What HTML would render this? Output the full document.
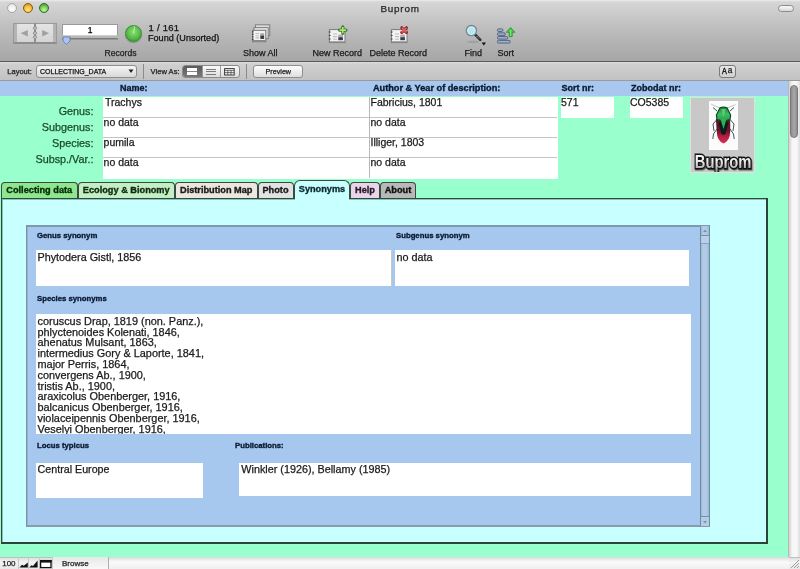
<!DOCTYPE html><html><head><meta charset="utf-8"><style>
html,body{margin:0;padding:0;width:800px;height:569px;overflow:hidden;background:#99ffcc;}
body{position:relative;font-family:"Liberation Sans", sans-serif;}
.t{position:absolute;white-space:nowrap;-webkit-text-stroke:0.25px currentColor;}
body{will-change:transform;}
.b{position:absolute;box-sizing:border-box;}
svg{position:absolute;}
</style></head><body>
<div class="b" style="left:0px;top:0px;width:800px;height:62px;background:linear-gradient(#ececec 0px,#d6d6d6 2px,#cbcbcb 14px,#bcbcbc 30px,#a6a6a6 61px);"></div>
<div class="b" style="left:0px;top:61px;width:800px;height:1px;background:#5a5a5a;"></div>
<div class="b" style="left:6.800000000000001px;top:3.4px;width:10px;height:10px;border-radius:50%;background:radial-gradient(circle at 50% 70%,#ffffff,#f0f0f0 50%,#d8d8d8);border:1px solid #a8a8a8;"></div>
<div class="b" style="left:22.9px;top:3.4px;width:10px;height:10px;border-radius:50%;background:radial-gradient(circle at 50% 75%,#ffe890,#f8b830 55%,#c07a10);border:1px solid #8a5a10;"></div>
<div class="b" style="left:39.3px;top:3.4px;width:10px;height:10px;border-radius:50%;background:radial-gradient(circle at 50% 75%,#c8f8a0,#70c850 55%,#3a8a28);border:1px solid #2a6a20;"></div>
<div class="t" style="left:300.1px;width:200px;text-align:center;top:3.92px;font-size:9.9px;line-height:9.9px;font-weight:400;color:#262626;letter-spacing:0.8px;">Buprom</div>
<div class="b" style="left:778px;top:4.5px;width:16px;height:7.5px;border-radius:4px;border:1px solid #8a8a8a;background:linear-gradient(#fafafa,#d8d8d8);"></div>
<div class="b" style="left:13px;top:23px;width:44px;height:20.5px;background:linear-gradient(#e4e4e4,#d4d4d4);border:1px solid #9a9a9a;border-bottom:2px solid #8e8e8e;box-shadow:inset 3px 0 0 #b4b4b4, inset -3px 0 0 #b4b4b4;"></div>
<div class="b" style="left:34px;top:23px;width:2px;height:20px;background:#8e8e8e;"></div>
<svg style="left:13px;top:23px" width="44" height="20"><path d="M7.6 10.2 L14.8 7 L14.8 13.5 Z" fill="#a0a0a0"/><path d="M36.1 10.2 L29.2 7 L29.2 13.5 Z" fill="#a0a0a0"/><ellipse cx="22" cy="5.1" rx="1.8" ry="1.2" fill="#d8d8d8" stroke="#8a8a8a" stroke-width="0.9"/><ellipse cx="22" cy="10.1" rx="1.8" ry="1.2" fill="#d8d8d8" stroke="#8a8a8a" stroke-width="0.9"/><ellipse cx="22" cy="14.2" rx="1.8" ry="1.2" fill="#d8d8d8" stroke="#8a8a8a" stroke-width="0.9"/></svg>
<div class="b" style="left:62px;top:24px;width:56px;height:12px;background:#fff;border:1px solid #9a9a9a;border-bottom-color:#cfcfcf;"></div>
<div class="t" style="left:-10px;width:200px;text-align:center;top:26.00px;font-size:8.5px;line-height:8.5px;font-weight:400;color:#000;">1</div>
<div class="b" style="left:62px;top:38.3px;width:56px;height:2.3000000000000043px;background:linear-gradient(#6e6e6e,#c0c0c0);border-radius:1px;"></div>
<svg style="left:62px;top:36px" width="10" height="10"><path d="M1 1 L8 1 L8 5 L4.5 8.5 L1 5 Z" fill="#a8c4f0" stroke="#5a78b0" stroke-width="0.8"/></svg>
<div class="b" style="left:124.8px;top:25px;width:17px;height:17px;border-radius:50%;background:radial-gradient(circle at 50% 40%,#8ee07a,#58c048 50%,#2e8a2a 100%);border:1px solid #3a8a34;box-shadow:0 1px 1px rgba(0,0,0,.25);"></div>
<svg style="left:124.8px;top:25px" width="17" height="17"><path d="M8.5 8.5 L9.6 1.2" stroke="#c8f0b0" stroke-width="0.9"/></svg>
<div class="t" style="left:104.5px;top:49.22px;font-size:8.6px;line-height:8.6px;font-weight:400;color:#222;">Records</div>
<div class="t" style="left:148.5px;top:22.96px;font-size:9.5px;line-height:9.5px;font-weight:400;color:#111;letter-spacing:0.25px;">1 / 161</div>
<div class="t" style="left:148px;top:34.20px;font-size:9.1px;line-height:9.1px;font-weight:400;color:#111;">Found (Unsorted)</div>
<svg style="left:250px;top:23px" width="22" height="21">
<rect x="5.5" y="1.8" width="14.2" height="11" fill="#dcdcdc" stroke="#7e7e7e" stroke-width="1"/>
<rect x="4" y="4.6" width="14.2" height="11" fill="#e4e4e4" stroke="#7e7e7e" stroke-width="1"/>
<rect x="2.6" y="7.3" width="13.2" height="11.4" fill="#f2f2f2" stroke="#747474" stroke-width="1"/>
<path d="M2.6 17.8 h13.2" stroke="#888" stroke-width="1.6"/>
<path d="M5.5 10.5 h3.5 M5.5 12.7 h3.5 M5.5 14.9 h3.5" stroke="#b8c0c8" stroke-width="1.1"/>
<rect x="10.3" y="10.3" width="3.8" height="2.2" fill="#b8a0a0"/>
<rect x="10.3" y="12.5" width="3.8" height="3.4" fill="#3a3a48"/>
<path d="M2 8.8 h1.6 M2 11.3 h1.6 M2 13.8 h1.6 M2 16.3 h1.6" stroke="#404040" stroke-width="1.2"/>
</svg>
<div class="t" style="left:243px;top:48.68px;font-size:9px;line-height:9px;font-weight:400;color:#1a1a1a;">Show All</div>
<svg style="left:327px;top:24px" width="24" height="20">
<rect x="2.4" y="5.6" width="15.6" height="13" fill="#f2f2f2" stroke="#7a7a7a" stroke-width="1"/>
<path d="M2.4 18 h15.6" stroke="#888" stroke-width="1.4"/>
<path d="M6 10 h4 M6 12.6 h4 M6 15.2 h4" stroke="#b8c0c8" stroke-width="1.1"/>
<rect x="11.3" y="10.6" width="4.6" height="2.6" fill="#b8a8a8"/>
<rect x="11.3" y="13.2" width="4.6" height="3" fill="#3a3a50"/>
<path d="M1.8 8 h1.8 M1.8 11.5 h1.8 M1.8 15 h1.8" stroke="#404040" stroke-width="1.2"/>
<path d="M12.6 6.1 h6.4 M15.8 2.9 v6.4" stroke="#3a7a28" stroke-width="3.2" stroke-linecap="round"/>
<path d="M12.6 6.1 h6.4 M15.8 2.9 v6.4" stroke="#a8e878" stroke-width="1.6"/>
</svg>
<div class="t" style="left:312.5px;top:48.68px;font-size:9px;line-height:9px;font-weight:400;color:#1a1a1a;">New Record</div>
<svg style="left:389px;top:24px" width="24" height="20">
<rect x="2.4" y="5.6" width="15.6" height="13" fill="#f2f2f2" stroke="#7a7a7a" stroke-width="1"/>
<path d="M2.4 18 h15.6" stroke="#888" stroke-width="1.4"/>
<path d="M6 10 h4 M6 12.6 h4 M6 15.2 h4" stroke="#b8c0c8" stroke-width="1.1"/>
<rect x="11.3" y="10.6" width="4.6" height="2.6" fill="#b8a8a8"/>
<rect x="11.3" y="13.2" width="4.6" height="3" fill="#3a3a50"/>
<path d="M1.8 8 h1.8 M1.8 11.5 h1.8 M1.8 15 h1.8" stroke="#404040" stroke-width="1.2"/>
<path d="M12.8 3.8 l4.6 4.6 M17.4 3.8 l-4.6 4.6" stroke="#8a2a2a" stroke-width="3.2" stroke-linecap="round"/>
<path d="M12.8 3.8 l4.6 4.6 M17.4 3.8 l-4.6 4.6" stroke="#e86060" stroke-width="1.6"/>
</svg>
<div class="t" style="left:369.5px;top:48.68px;font-size:9px;line-height:9px;font-weight:400;color:#1a1a1a;">Delete Record</div>
<svg style="left:462px;top:22px" width="26" height="25">
<ellipse cx="11" cy="19.8" rx="6.5" ry="1.2" fill="rgba(0,0,0,0.10)"/>
<line x1="13.2" y1="12.6" x2="18.3" y2="17.8" stroke="#2a2a2a" stroke-width="2.5" stroke-linecap="round"/>
<line x1="14.6" y1="14.1" x2="17.6" y2="17.1" stroke="#e0e0e0" stroke-width="0.8" stroke-dasharray="1.2 0.8"/>
<circle cx="9.4" cy="8.6" r="5.1" fill="#d4f0f8" stroke="#6a8a94" stroke-width="1.3"/>
<circle cx="9.4" cy="8.9" r="3.2" fill="#a8dcec" opacity="0.6"/>
<path d="M19.6 20.4 h4.4 l-2.2 3 z" fill="#111"/>
</svg>
<div class="t" style="left:464.5px;top:48.68px;font-size:9px;line-height:9px;font-weight:400;color:#1a1a1a;">Find</div>
<svg style="left:496px;top:26px" width="22" height="19">
<rect x="1.4" y="2.9" width="5.6" height="2.6" rx="1.2" fill="#9ab0cc" stroke="#4e5e7c" stroke-width="0.9"/>
<rect x="1.4" y="6.8" width="7.9" height="2.6" rx="1.2" fill="#9ab0cc" stroke="#4e5e7c" stroke-width="0.9"/>
<rect x="1.4" y="10.5" width="10.4" height="2.6" rx="1.2" fill="#9ab0cc" stroke="#4e5e7c" stroke-width="0.9"/>
<rect x="1.4" y="14.4" width="12.9" height="2.7" rx="1.2" fill="#9ab0cc" stroke="#4e5e7c" stroke-width="0.9"/>
<path d="M14.6 1.6 L18.9 6.3 L16.2 6.3 L16.2 10.6 L13.2 10.6 L13.2 6.3 L10.3 6.3 Z" fill="#48c848" stroke="#2a8a2a" stroke-width="0.8" stroke-linejoin="round"/>
<path d="M14.7 4 v6" stroke="#7af07a" stroke-width="1"/>
</svg>
<div class="t" style="left:497.5px;top:48.68px;font-size:9px;line-height:9px;font-weight:400;color:#1a1a1a;">Sort</div>
<div class="b" style="left:0px;top:62px;width:800px;height:19px;background:linear-gradient(#dedede 0px,#d0d0d0 2px,#c2c2c2 18px);border-bottom:1px solid #9a9a9a;"></div>
<div class="t" style="left:7.3px;top:67.95px;font-size:7.5px;line-height:7.5px;font-weight:400;color:#222;">Layout:</div>
<div class="b" style="left:35.5px;top:65px;width:101.5px;height:13px;background:linear-gradient(#f6f6f6,#d8d8d8);border:1px solid #8e8e8e;border-radius:3px;"></div>
<div class="t" style="left:40px;top:68.27px;font-size:7px;line-height:7px;font-weight:400;color:#111;">COLLECTING_DATA</div>
<svg style="left:128px;top:69px" width="6" height="5"><path d="M0.5 0.5 h5 l-2.5 3.5 z" fill="#222"/></svg>
<div class="b" style="left:143px;top:64px;width:1px;height:15px;background:#8a8a8a;"></div>
<div class="t" style="left:150.6px;top:67.87px;font-size:7.6px;line-height:7.6px;font-weight:400;color:#222;">View As:</div>
<div class="b" style="left:182px;top:65px;width:58px;height:13px;background:linear-gradient(#fafafa,#dcdcdc);border:1px solid #8a8a8a;border-radius:3px;"></div>
<div class="b" style="left:183px;top:66px;width:19px;height:11px;background:linear-gradient(#5a5a5a,#7a7a7a);border-radius:2px 0 0 2px;"></div>
<div class="b" style="left:187px;top:67.8px;width:10px;height:7.400000000000006px;background:#fff;border-top:0;"></div>
<div class="b" style="left:187px;top:71.2px;width:10px;height:0.5999999999999943px;background:#888;"></div>
<div class="b" style="left:202px;top:66px;width:1px;height:11px;background:#9a9a9a;"></div>
<div class="b" style="left:220px;top:66px;width:1px;height:11px;background:#9a9a9a;"></div>
<div class="b" style="left:206px;top:68.5px;width:10px;height:1.0px;background:#7a7a7a;"></div>
<div class="b" style="left:206px;top:71px;width:10px;height:1px;background:#7a7a7a;"></div>
<div class="b" style="left:206px;top:73.5px;width:10px;height:1.0px;background:#7a7a7a;"></div>
<svg style="left:224px;top:67.5px" width="11" height="8"><rect x="0.6" y="0.6" width="9.6" height="6.4" fill="#f4f4f4" stroke="#3a3a3a" stroke-width="1"/><path d="M0.6 2.4 h9.6 M0.6 4.6 h9.6 M3.8 2.4 v4.6 M7 2.4 v4.6" stroke="#3a3a3a" stroke-width="0.7"/></svg>
<div class="b" style="left:246px;top:64px;width:1px;height:15px;background:#8a8a8a;"></div>
<div class="b" style="left:253px;top:65px;width:49.5px;height:13px;background:linear-gradient(#fdfdfd,#dedede);border:1px solid #8e8e8e;border-radius:3px;"></div>
<div class="t" style="left:265.5px;top:68.11px;font-size:7.2px;line-height:7.2px;font-weight:400;color:#222;">Preview</div>
<div class="b" style="left:719px;top:65.2px;width:17px;height:12.399999999999991px;background:linear-gradient(#e8e8e8,#d0d0d0);border:1px solid #7a7a7a;border-radius:3px;"></div>
<div class="t" style="left:722.4px;top:67.28px;font-size:9px;line-height:9px;font-weight:400;color:#1a1a1a;transform:scaleX(0.8);transform-origin:0 0;-webkit-text-stroke:0.5px #1a1a1a;">A</div>
<div class="t" style="left:727.8px;top:67.16px;font-size:8.2px;line-height:8.2px;font-weight:400;color:#1a1a1a;">a</div>
<div class="b" style="left:0px;top:81px;width:788px;height:15px;background:#a8c8f0;"></div>
<div class="t" style="left:120px;top:84.18px;font-size:9px;line-height:9px;font-weight:700;color:#0a1a30;-webkit-text-stroke:0.35px currentColor;">Name:</div>
<div class="t" style="left:372.9px;top:84.01px;font-size:9.2px;line-height:9.2px;font-weight:700;color:#0a1a30;-webkit-text-stroke:0.35px currentColor;">Author &amp; Year of description:</div>
<div class="t" style="left:561.5px;top:84.18px;font-size:9px;line-height:9px;font-weight:700;color:#0a1a30;-webkit-text-stroke:0.35px currentColor;">Sort nr:</div>
<div class="t" style="left:631px;top:84.18px;font-size:9px;line-height:9px;font-weight:700;color:#0a1a30;-webkit-text-stroke:0.35px currentColor;">Zobodat nr:</div>
<div class="t" style="right:706.5px;top:105.76px;font-size:10.8px;line-height:10.8px;font-weight:400;color:#1a4a2a;text-align:right;">Genus:</div>
<div class="t" style="right:706.5px;top:121.66px;font-size:10.8px;line-height:10.8px;font-weight:400;color:#1a4a2a;text-align:right;">Subgenus:</div>
<div class="t" style="right:706.5px;top:137.86px;font-size:10.8px;line-height:10.8px;font-weight:400;color:#1a4a2a;text-align:right;">Species:</div>
<div class="t" style="right:706.5px;top:154.46px;font-size:10.8px;line-height:10.8px;font-weight:400;color:#1a4a2a;text-align:right;">Subsp./Var.:</div>
<div class="b" style="left:103px;top:97px;width:455px;height:81.5px;background:#fff;"></div>
<div class="b" style="left:103px;top:117px;width:453.5px;height:1px;background:#c4c4c4;"></div>
<div class="b" style="left:103px;top:137px;width:453.5px;height:1px;background:#c4c4c4;"></div>
<div class="b" style="left:103px;top:157px;width:453.5px;height:1px;background:#c4c4c4;"></div>
<div class="b" style="left:369px;top:97px;width:1px;height:81px;background:#b8b8b8;"></div>
<div class="t" style="left:105px;top:96.91px;font-size:10.5px;line-height:10.5px;font-weight:400;color:#1a1a1a;">Trachys</div>
<div class="t" style="left:103.6px;top:117.01px;font-size:10.5px;line-height:10.5px;font-weight:400;color:#1a1a1a;">no data</div>
<div class="t" style="left:103.6px;top:137.11px;font-size:10.5px;line-height:10.5px;font-weight:400;color:#1a1a1a;">pumila</div>
<div class="t" style="left:103.6px;top:157.11px;font-size:10.5px;line-height:10.5px;font-weight:400;color:#1a1a1a;">no data</div>
<div class="t" style="left:370.5px;top:97.11px;font-size:10.5px;line-height:10.5px;font-weight:400;color:#1a1a1a;">Fabricius, 1801</div>
<div class="t" style="left:370.5px;top:117.01px;font-size:10.5px;line-height:10.5px;font-weight:400;color:#1a1a1a;">no data</div>
<div class="t" style="left:370.5px;top:137.11px;font-size:10.5px;line-height:10.5px;font-weight:400;color:#1a1a1a;">Illiger, 1803</div>
<div class="t" style="left:370.5px;top:157.11px;font-size:10.5px;line-height:10.5px;font-weight:400;color:#1a1a1a;">no data</div>
<div class="b" style="left:560.5px;top:97px;width:53.5px;height:21px;background:#fff;"></div>
<div class="t" style="left:561px;top:97.11px;font-size:10.5px;line-height:10.5px;font-weight:400;color:#1a1a1a;">571</div>
<div class="b" style="left:629.5px;top:97px;width:53.5px;height:21px;background:#fff;"></div>
<div class="t" style="left:630px;top:97.11px;font-size:10.5px;line-height:10.5px;font-weight:400;color:#1a1a1a;">CO5385</div>
<div class="b" style="left:690px;top:96.5px;width:64.5px;height:76.5px;background:#c8c8c8;border:1px solid #e0e0e0;"></div>
<div class="b" style="left:709px;top:101px;width:28.5px;height:48.5px;background:#fbfbfb;"></div>
<svg style="left:709px;top:101px" width="29" height="48">
<defs><linearGradient id="ely" x1="0" y1="0" x2="0" y2="1"><stop offset="0" stop-color="#601424"/><stop offset="0.5" stop-color="#6a1428"/><stop offset="0.68" stop-color="#b01a40"/><stop offset="1" stop-color="#d83058"/></linearGradient>
<linearGradient id="pro" x1="0" y1="0" x2="0" y2="1"><stop offset="0" stop-color="#1e7a34"/><stop offset="0.5" stop-color="#3ac060"/><stop offset="1" stop-color="#2aa050"/></linearGradient></defs>
<path d="M2.2 3.2 L10.2 6.8 M26.8 3.6 L18.8 6.8" stroke="#a8b0b0" stroke-width="0.7" fill="none"/>
<path d="M8 10 L4 6.5 M21 10 L25 6.5 M7.5 19 L4 23 L5 30 M21.5 19 L25 23 L24 30 M8 28 L4.5 33 L3.8 38 M21 28 L24.5 33 L25.2 38" stroke="#3a5a5a" stroke-width="1" fill="none"/>
<path d="M6.9 18.3 Q14.5 16 21.1 18.3 L21.3 30 Q21 40 14.5 42.5 Q8 40 7.7 30 Z" fill="url(#ely)"/>
<path d="M14.5 18 L9.5 22 L12.5 33 L14.5 34 L16.5 33 L19.5 22 Z" fill="#0a1e1c"/>
<path d="M11 6.8 Q14.5 5.5 18 6.8 L21.6 14 L21 18.6 Q14.5 20.5 8 18.6 L7.4 14 Z" fill="url(#pro)" stroke="#0e4a20" stroke-width="1.2"/>
<path d="M11.5 18 L14.5 28 L17.5 18 Z" fill="#30b058"/>
<path d="M12.2 8 L14.5 16 L16.8 8 Z" fill="#7ae090" opacity="0.6"/>
</svg>
<svg style="left:690px;top:148px" width="66" height="24"><defs><linearGradient id="bg1" x1="0" y1="0" x2="0" y2="1"><stop offset="0" stop-color="#ffffff"/><stop offset="0.55" stop-color="#e8e8e8"/><stop offset="1" stop-color="#9a9a9a"/></linearGradient></defs>
<g transform="translate(33,19.5) scale(0.82,1)"><text x="1" y="1.2" text-anchor="middle" font-family="Liberation Sans" font-weight="700" font-size="18" fill="#000" stroke="#000" stroke-width="3" opacity="0.55">Buprom</text>
<text x="0" y="0" text-anchor="middle" font-family="Liberation Sans" font-weight="700" font-size="18" fill="url(#bg1)" stroke="#111" stroke-width="2.8" paint-order="stroke">Buprom</text></g></svg>
<div class="b" style="left:1px;top:182px;width:76.5px;height:17px;background:#8ee68e;border:1px solid #3a4a40;border-bottom:0;border-radius:4px 4px 0 0;"></div>
<div class="t" style="left:-60.75px;width:200px;text-align:center;top:185.61px;font-size:9.2px;line-height:9.2px;font-weight:700;color:#062a08;-webkit-text-stroke:0.35px currentColor;">Collecting data</div>
<div class="b" style="left:77.5px;top:182px;width:97.5px;height:17px;background:#c4eec4;border:1px solid #3a4a40;border-bottom:0;border-radius:4px 4px 0 0;"></div>
<div class="t" style="left:26.25px;width:200px;text-align:center;top:185.61px;font-size:9.2px;line-height:9.2px;font-weight:700;color:#0e2a10;-webkit-text-stroke:0.35px currentColor;">Ecology &amp; Bionomy</div>
<div class="b" style="left:175px;top:182px;width:82.5px;height:17px;background:#ebe7df;border:1px solid #3a4a40;border-bottom:0;border-radius:4px 4px 0 0;"></div>
<div class="t" style="left:116.25px;width:200px;text-align:center;top:185.61px;font-size:9.2px;line-height:9.2px;font-weight:700;color:#1a1a1a;-webkit-text-stroke:0.35px currentColor;">Distribution Map</div>
<div class="b" style="left:257.5px;top:182px;width:36.0px;height:17px;background:#e2e2e2;border:1px solid #3a4a40;border-bottom:0;border-radius:4px 4px 0 0;"></div>
<div class="t" style="left:175.5px;width:200px;text-align:center;top:185.61px;font-size:9.2px;line-height:9.2px;font-weight:700;color:#1a1a1a;-webkit-text-stroke:0.35px currentColor;">Photo</div>
<div class="b" style="left:350px;top:182px;width:30px;height:17px;background:#ead4ea;border:1px solid #3a4a40;border-bottom:0;border-radius:4px 4px 0 0;"></div>
<div class="t" style="left:265.0px;width:200px;text-align:center;top:185.61px;font-size:9.2px;line-height:9.2px;font-weight:700;color:#2a1a2a;-webkit-text-stroke:0.35px currentColor;">Help</div>
<div class="b" style="left:380px;top:182px;width:36px;height:17px;background:#b8b8b8;border:1px solid #3a4a40;border-bottom:0;border-radius:4px 4px 0 0;"></div>
<div class="t" style="left:298.0px;width:200px;text-align:center;top:185.61px;font-size:9.2px;line-height:9.2px;font-weight:700;color:#111;-webkit-text-stroke:0.35px currentColor;">About</div>
<div class="b" style="left:1px;top:198px;width:766.5px;height:345.5px;background:#c8ffff;border:1px solid #2a4a3c;border-right:2px solid #2a4438;border-bottom:2px solid #2a4438;box-shadow:inset 1px 1px 0 rgba(42,74,60,0.35);"></div>
<div class="b" style="left:293.8px;top:180.3px;width:56.2px;height:19px;background:#c8ffff;border:1.5px solid #3a4a40;border-bottom:0;border-radius:6px 6px 0 0;"></div>
<div class="b" style="left:295px;top:198px;width:54px;height:1.5px;background:#c8ffff;"></div>
<div class="t" style="left:222px;width:200px;text-align:center;top:185.21px;font-size:9.2px;line-height:9.2px;font-weight:700;color:#0a2a30;-webkit-text-stroke:0.35px currentColor;">Synonyms</div>
<div class="b" style="left:26px;top:225px;width:684px;height:302px;background:#a6c8ee;border:1px solid #7890aa;border-top:2px solid #7e9ab0;border-bottom:2px solid #8a9aaa;box-shadow:inset 1px 0 0 #98b2cc;"></div>
<div class="b" style="left:700px;top:226px;width:10px;height:300px;background:linear-gradient(90deg,#9ab6d4,#b2cce8 25%,#aec8e6 75%,#9ab6d4);border-left:1px solid #6e8a9c;border-right:1px solid #6e8a9c;"></div>
<div class="b" style="left:701px;top:235px;width:8px;height:1px;background:#7890a4;"></div>
<div class="b" style="left:701px;top:236px;width:8px;height:8px;background:#b8d0ea;border-bottom:1px solid #8aa2b8;"></div>
<svg style="left:701px;top:227px" width="8" height="8"><path d="M2 5 L4 2.8 L6 5 Z" fill="#7a8ea8"/></svg>
<div class="b" style="left:701px;top:516px;width:8px;height:1px;background:#7890a4;"></div>
<div class="b" style="left:701px;top:517px;width:8px;height:9px;background:#b4cce6;"></div>
<svg style="left:701px;top:518px" width="8" height="8"><path d="M2 3 L4 5.2 L6 3 Z" fill="#7a8ea8"/></svg>
<div class="t" style="left:37px;top:231.94px;font-size:7.75px;line-height:7.75px;font-weight:700;color:#0c1a34;-webkit-text-stroke:0.35px currentColor;">Genus synonym</div>
<div class="t" style="left:396px;top:231.94px;font-size:7.75px;line-height:7.75px;font-weight:700;color:#0c1a34;-webkit-text-stroke:0.35px currentColor;">Subgenus synonym</div>
<div class="b" style="left:36px;top:250px;width:355.5px;height:36px;background:#fff;border-right:1px solid #c8c8c8;"></div>
<div class="t" style="left:37.5px;top:251.66px;font-size:10.8px;line-height:10.8px;font-weight:400;color:#1a1a1a;">Phytodera Gistl, 1856</div>
<div class="b" style="left:395px;top:250px;width:293.5px;height:36px;background:#fff;"></div>
<div class="t" style="left:396.5px;top:251.66px;font-size:10.8px;line-height:10.8px;font-weight:400;color:#1a1a1a;">no data</div>
<div class="t" style="left:37px;top:295.34px;font-size:7.75px;line-height:7.75px;font-weight:700;color:#0c1a34;-webkit-text-stroke:0.35px currentColor;">Species synonyms</div>
<div class="b" style="left:36px;top:314.4px;width:654.5px;height:119.20000000000005px;background:#fff;"></div>
<div class="b" style="left:36px;top:315px;width:654px;height:118.6px;overflow:hidden;">
<div class="t" style="left:1.5px;top:0.87px;font-size:10.9px;line-height:10.9px;color:#1a1a1a;">coruscus Drap, 1819 (non. Panz.),</div>
<div class="t" style="left:1.5px;top:11.65px;font-size:10.9px;line-height:10.9px;color:#1a1a1a;">phlyctenoides Kolenati, 1846,</div>
<div class="t" style="left:1.5px;top:22.43px;font-size:10.9px;line-height:10.9px;color:#1a1a1a;">ahenatus Mulsant, 1863,</div>
<div class="t" style="left:1.5px;top:33.21px;font-size:10.9px;line-height:10.9px;color:#1a1a1a;">intermedius Gory &amp; Laporte, 1841,</div>
<div class="t" style="left:1.5px;top:43.99px;font-size:10.9px;line-height:10.9px;color:#1a1a1a;">major Perris, 1864,</div>
<div class="t" style="left:1.5px;top:54.77px;font-size:10.9px;line-height:10.9px;color:#1a1a1a;">convergens Ab., 1900,</div>
<div class="t" style="left:1.5px;top:65.55px;font-size:10.9px;line-height:10.9px;color:#1a1a1a;">tristis Ab., 1900,</div>
<div class="t" style="left:1.5px;top:76.33px;font-size:10.9px;line-height:10.9px;color:#1a1a1a;">araxicolus Obenberger, 1916,</div>
<div class="t" style="left:1.5px;top:87.11px;font-size:10.9px;line-height:10.9px;color:#1a1a1a;">balcanicus Obenberger, 1916,</div>
<div class="t" style="left:1.5px;top:97.89px;font-size:10.9px;line-height:10.9px;color:#1a1a1a;">violaceipennis Obenberger, 1916,</div>
<div class="t" style="left:1.5px;top:108.67px;font-size:10.9px;line-height:10.9px;color:#1a1a1a;">Veselyi Obenberger, 1916,</div>
</div>
<div class="t" style="left:37px;top:442.44px;font-size:7.75px;line-height:7.75px;font-weight:700;color:#0c1a34;-webkit-text-stroke:0.35px currentColor;">Locus typicus</div>
<div class="t" style="left:235px;top:442.44px;font-size:7.75px;line-height:7.75px;font-weight:700;color:#0c1a34;-webkit-text-stroke:0.35px currentColor;">Publications:</div>
<div class="b" style="left:36px;top:463px;width:167px;height:35.19999999999999px;background:#fff;"></div>
<div class="t" style="left:37.6px;top:463.94px;font-size:10.7px;line-height:10.7px;font-weight:400;color:#1a1a1a;">Central Europe</div>
<div class="b" style="left:239px;top:463px;width:452px;height:33px;background:#fff;"></div>
<div class="t" style="left:241.3px;top:463.86px;font-size:10.8px;line-height:10.8px;font-weight:400;color:#1a1a1a;">Winkler (1926), Bellamy (1985)</div>
<div class="b" style="left:788px;top:81px;width:12px;height:476px;background:linear-gradient(90deg,#d0d0d0,#f6f6f6 30%,#f8f8f8 70%,#dcdcdc);border-left:1px solid #b8b8b8;"></div>
<div class="b" style="left:790px;top:84.5px;width:8.299999999999955px;height:53.0px;background:linear-gradient(90deg,#8a8a8a,#a8a8a8 50%,#8e8e8e);border-radius:4px;border:1px solid #7a7a7a;"></div>
<div class="b" style="left:0px;top:557px;width:800px;height:12px;background:linear-gradient(#e0e0e0,#f4f4f4 40%,#e8e8e8);border-top:1px solid #c0c0c0;"></div>
<div class="t" style="left:2.2px;top:559.63px;font-size:8px;line-height:8px;font-weight:400;color:#222;">100</div>
<div class="b" style="left:18px;top:557px;width:1px;height:12px;background:#c8c8c8;"></div>
<div class="b" style="left:28px;top:557px;width:1px;height:12px;background:#c8c8c8;"></div>
<div class="b" style="left:38.5px;top:557px;width:1.0px;height:12px;background:#c8c8c8;"></div>
<div class="b" style="left:52px;top:557px;width:1px;height:12px;background:#c8c8c8;"></div>
<svg style="left:19px;top:559px" width="34" height="10"><path d="M0.5 8.6 L3 5.8 L4.8 6.8 L8.8 3.6 L8.8 8.6 Z" fill="#111"/><path d="M10.2 8.6 L12.6 6.2 L14 7 L18.6 1.4 L18.6 8.6 Z" fill="#111"/><rect x="21.6" y="1.6" width="10.4" height="7" fill="#fff" stroke="#111" stroke-width="1.3"/><rect x="21" y="1" width="11.6" height="2.6" fill="#111"/></svg>
<div class="b" style="left:53px;top:557px;width:55px;height:12px;background:linear-gradient(#e8e8e8,#f8f8f8);"></div>
<div class="t" style="left:62px;top:559.63px;font-size:8px;line-height:8px;font-weight:400;color:#222;">Browse</div>
<div class="b" style="left:108px;top:557px;width:681px;height:12px;background:linear-gradient(#dadada,#fafafa 40%,#f0f0f0);border-left:1px solid #b0b0b0;"></div>
<svg style="left:788px;top:557px" width="12" height="12"><path d="M3 11 L11 3 M6 11 L11 6 M9 11 L11 9" stroke="#888" stroke-width="0.8"/></svg>
</body></html>
